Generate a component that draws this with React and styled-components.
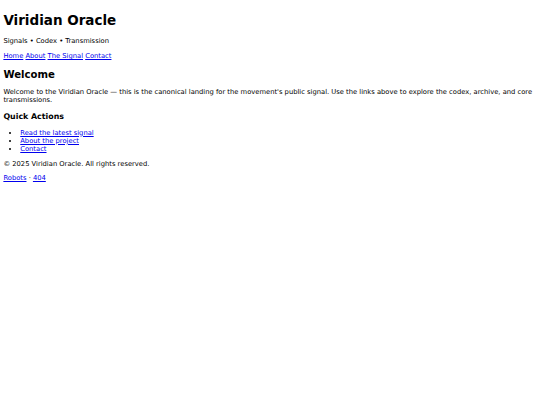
import React from 'react';
import styled, { createGlobalStyle } from 'styled-components';

const GlobalStyle = createGlobalStyle`
  html, body {
    background: #fff;
  }
  body {
    margin: 3.375px;
    font-family: 'DejaVu Sans', sans-serif;
    font-size: 6.75px;
    color: #000;
  }
`;

const Title = styled.h1`
  font-size: 2em;
  font-weight: bold;
  margin: 0.67em 0;
`;

const Tagline = styled.p`
  margin: 1em 0;
`;

const Nav = styled.nav`
  display: block;
  margin: 1em 0;
`;

const Link = styled.a`
  color: #0000ee;
  text-decoration: underline;
`;

const Heading = styled.h2`
  font-size: 1.5em;
  font-weight: bold;
  margin: 0.83em 0;
`;

const SubHeading = styled.h3`
  font-size: 1.17em;
  font-weight: bold;
  margin: 1em 0;
`;

const Text = styled.p`
  margin: 1em 0;
`;

const ActionList = styled.ul`
  margin: 1em 0;
  padding-left: 16.875px;
  list-style: disc;
`;

const links = ['Home', 'About', 'The Signal', 'Contact'];
const actions = ['Read the latest signal', 'About the project', 'Contact'];

export default function App() {
  return (
    <>
      <GlobalStyle />
      <header>
        <Title>Viridian Oracle</Title>
        <Tagline>Signals • Codex • Transmission</Tagline>
        <Nav>
          {links.map((l, i) => (
            <React.Fragment key={l}>
              {i > 0 && ' '}
              <Link href="#">{l}</Link>
            </React.Fragment>
          ))}
        </Nav>
      </header>
      <main>
        <Heading>Welcome</Heading>
        <Text>
          Welcome to the Viridian Oracle — this is the canonical landing for the movement's public signal.
          Use the links above to explore the codex, archive, and core transmissions.
        </Text>
        <SubHeading>Quick Actions</SubHeading>
        <ActionList>
          {actions.map((a) => (
            <li key={a}><Link href="#">{a}</Link></li>
          ))}
        </ActionList>
      </main>
      <footer>
        <Text>© 2025 Viridian Oracle. All rights reserved.</Text>
        <Text>
          <Link href="#">Robots</Link> · <Link href="#">404</Link>
        </Text>
      </footer>
    </>
  );
}
